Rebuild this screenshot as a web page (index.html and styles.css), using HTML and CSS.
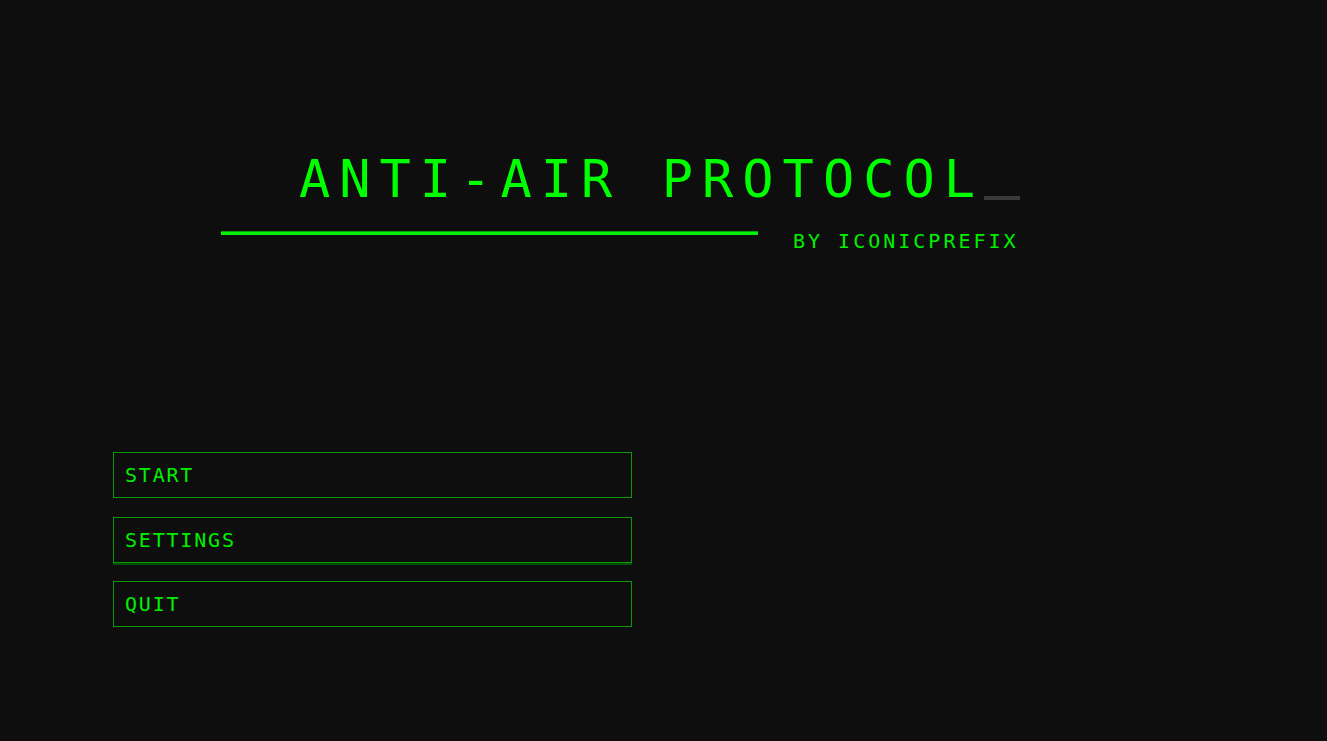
FILE: index.html
```html
<!DOCTYPE html>
<html lang="en">
<head>
<meta charset="utf-8">
<title>Anti-Air Protocol</title>
<link rel="stylesheet" href="styles.css">
</head>
<body>
  <header class="header">
    <h1 class="title">ANTI-AIR PROTOCOL<span class="cursor"></span></h1>
    <div class="byline-row">
      <div class="rule"></div>
      <div class="byline">BY ICONICPREFIX</div>
    </div>
  </header>
  <nav class="menu">
    <button class="menu-btn">START</button>
    <button class="menu-btn is-hover">SETTINGS</button>
    <button class="menu-btn">QUIT</button>
  </nav>
</body>
</html>
```

FILE: styles.css
```css
html, body {
  margin: 0;
  padding: 0;
  background: #0e0e0e;
  height: 100%;
}

body {
  font-family: "DejaVu Sans Mono", "Liberation Mono", monospace;
  color: #00ff00;
  overflow: hidden;
}

.header {
  padding-top: 149px;
}

.title {
  margin: 0;
  padding-right: 8px;
  font-size: 52px;
  font-weight: normal;
  line-height: normal;
  letter-spacing: 9px;
  text-align: center;
  color: #00ff00;
}

.cursor {
  display: inline-block;
  width: 36px;
  height: 4px;
  background: #3a3a3a;
  vertical-align: baseline;
  margin-bottom: -3px;
}

.byline-row {
  display: flex;
  align-items: flex-start;
  margin-top: 20px;
  padding-left: 221px;
  gap: 35px;
}

.rule {
  width: 537px;
  height: 3px;
  margin-top: 2px;
  background: #00f000;
  border-top: 1px solid #0b9c0b;
}

.byline {
  font-size: 20px;
  letter-spacing: 3px;
  line-height: normal;
  color: #00f000;
}

.menu {
  display: flex;
  flex-direction: column;
  gap: 18.5px;
  margin-top: 199px;
  margin-left: 113px;
  width: 519px;
}

.menu-btn {
  display: flex;
  align-items: center;
  box-sizing: border-box;
  height: 46px;
  padding: 0 11px;
  background: transparent;
  border: 1px solid #0a980a;
  color: #00f000;
  font-family: "DejaVu Sans Mono", "Liberation Mono", monospace;
  font-size: 20px;
  letter-spacing: 1.8px;
  text-align: left;
  cursor: pointer;
}

.menu-btn.is-hover {
  box-shadow: 0 2px 0 #064d06;
}
```
